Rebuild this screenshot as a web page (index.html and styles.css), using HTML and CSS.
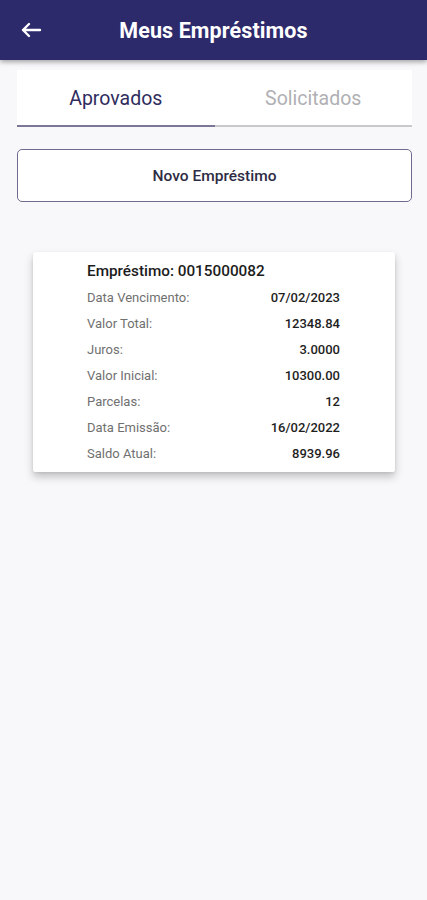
FILE: index.html
```html
<!DOCTYPE html>
<html lang="pt-BR">
<head>
<meta charset="utf-8">
<title>Meus Empréstimos</title>
<link rel="stylesheet" href="styles.css">
</head>
<body>
<header class="appbar">
  <button class="back" aria-label="Voltar">
    <svg width="22" height="16" viewBox="0 0 22 16"><path d="M20 8H3M9 2L3 8l6 6" fill="none" stroke="#fff" stroke-width="2.4" stroke-linecap="round" stroke-linejoin="round"/></svg>
  </button>
  <h1 class="title">Meus Empréstimos</h1>
  <span></span>
</header>
<main class="content">
  <nav class="tabs">
    <div class="tab active">Aprovados</div>
    <div class="tab">Solicitados</div>
  </nav>
  <button class="new-loan">Novo Empréstimo</button>
  <section class="card">
    <div class="card-title">Empréstimo: 0015000082</div>
    <div class="row"><span class="label">Data Vencimento:</span><span class="value">07/02/2023</span></div>
    <div class="row"><span class="label">Valor Total:</span><span class="value">12348.84</span></div>
    <div class="row"><span class="label">Juros:</span><span class="value">3.0000</span></div>
    <div class="row"><span class="label">Valor Inicial:</span><span class="value">10300.00</span></div>
    <div class="row"><span class="label">Parcelas:</span><span class="value">12</span></div>
    <div class="row"><span class="label">Data Emissão:</span><span class="value">16/02/2022</span></div>
    <div class="row"><span class="label">Saldo Atual:</span><span class="value">8939.96</span></div>
  </section>
</main>
</body>
</html>
```
FILE: styles.css
```css
* { box-sizing: border-box; }
html, body { margin: 0; padding: 0; }
body {
  background: #f8f8fa;
  font-family: Roboto, "Liberation Sans", Arial, sans-serif;
  height: 900px;
  overflow: hidden;
}
.appbar {
  height: 60px;
  background: #2d2a6c;
  display: grid;
  grid-template-columns: 1fr auto 1fr;
  align-items: center;
  box-shadow: 0 2px 5px rgba(0,0,0,0.35);
  position: relative;
  z-index: 1;
}
.back {
  background: none;
  border: 0;
  padding: 0 0 0 20px;
  margin: 0;
  display: flex;
  align-items: center;
  height: 60px;
  justify-self: start;
}
.title {
  margin: 0;
  color: #fff;
  font-size: 21.5px;
  font-weight: 700;
  letter-spacing: 0.1px;
}
.content {
  padding: 10px 15px 0 17px;
  display: flex;
  flex-direction: column;
}
.tabs {
  display: flex;
  height: 57px;
  background: #fff;
}
.tab {
  flex: 1;
  display: flex;
  align-items: center;
  justify-content: center;
  font-size: 19.5px;
  color: #b0b0b4;
  border-bottom: 2px solid #c9c9cc;
  padding-top: 2px;
}
.tab.active {
  color: #2f2c5e;
  border-bottom-color: #7a7896;
}
.new-loan {
  margin-top: 22px;
  height: 53px;
  background: #fff;
  border: 1px solid #6e6c8e;
  border-radius: 5px;
  font-family: inherit;
  font-size: 15.5px;
  font-weight: 500;
  color: #2e2c44;
}
.card {
  margin: 50px 17px 0 16px;
  background: #fff;
  padding: 10px 55px 6px 54px;
  box-shadow: 0 5px 8px rgba(0,0,0,0.22), 0 1px 3px rgba(0,0,0,0.08);
  border-radius: 2px;
}
.card-title {
  font-size: 15.3px;
  font-weight: 500;
  line-height: 18px;
  color: #1c1c1c;
  margin-bottom: 4px;
}
.row {
  display: flex;
  justify-content: space-between;
  align-items: center;
  height: 26px;
  font-size: 13px;
}
.label { color: #707070; }
.value { color: #1e1e1e; font-weight: 500; }
```
